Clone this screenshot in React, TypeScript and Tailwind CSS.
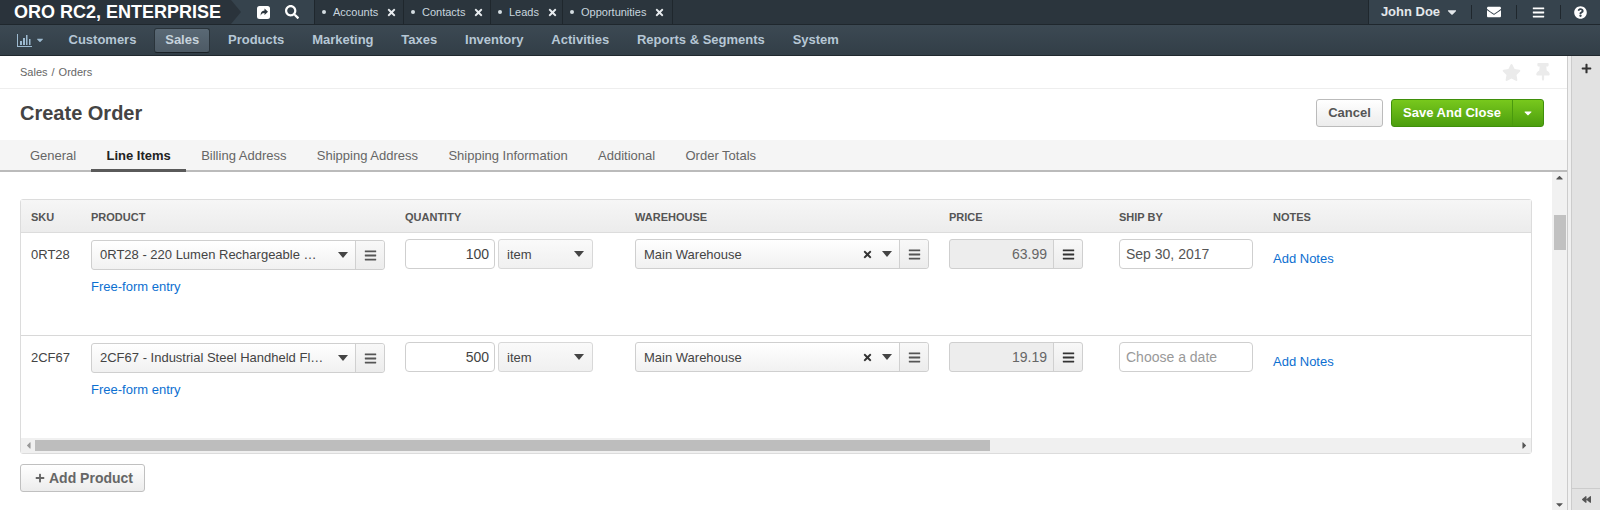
import React from "react";
import {
  FaCaretDown,
  FaBars,
  FaEnvelope,
  FaQuestionCircle,
  FaSearch,
  FaStar,
  FaThumbtack,
  FaTimes,
  FaPlus,
  FaBackward,
  FaCaretUp,
  FaCaretLeft,
  FaCaretRight,
} from "react-icons/fa";

const navItems = [
  "Customers",
  "Sales",
  "Products",
  "Marketing",
  "Taxes",
  "Inventory",
  "Activities",
  "Reports & Segments",
  "System",
];

const pinTabs = [
  { label: "Accounts", width: "w-[89px]" },
  { label: "Contacts", width: "w-[87px]" },
  { label: "Leads", width: "w-[72px]" },
  { label: "Opportunities", width: "w-[110px]" },
];

const pageTabs = [
  "General",
  "Line Items",
  "Billing Address",
  "Shipping Address",
  "Shipping Information",
  "Additional",
  "Order Totals",
];

function ChartIcon() {
  return (
    <svg width="15" height="13" viewBox="0 0 15 13" fill="currentColor">
      <path d="M0 0h1v12h14v1H0z" />
      <path d="M3 7h2v4H3zM6 4h2v7H6zM9 1h1.500v10H9zM12 5h1.500v6H12z" />
    </svg>
  );
}

function ShareIcon() {
  return (
    <svg width="13" height="13" viewBox="0 0 13 13">
      <rect width="13" height="13" rx="2.500" fill="#ffffff" />
      <path
        d="M7.500 2.500 11 5.700 7.500 8.900V7C5.500 7 4.300 7.700 3.700 9.800 3.300 6.700 4.800 4.600 7.500 4.400z"
        fill="#2c363e"
      />
    </svg>
  );
}

function Triangle() {
  return (
    <svg width="10" height="6" viewBox="0 0 10 6" className="shrink-0 text-[#444]" fill="currentColor">
      <path d="M0 0h10L5 6z" />
    </svg>
  );
}

function ListButton({ dark }: { dark?: boolean }) {
  return (
    <div
      className={`flex w-[29px] shrink-0 items-center justify-center rounded-r-[3px] border-l border-[#d0d0d0] bg-linear-to-b from-[#f8f8f8] to-[#ececec] ${
        dark ? "text-[#333]" : "text-[#555]"
      }`}
    >
      <FaBars size={13} />
    </div>
  );
}

function ProductSelect({ text }: { text: string }) {
  return (
    <div className="flex h-[30px] w-[294px] rounded-[3px] border border-[#cfcfcf] bg-linear-to-b from-white to-[#f1f1f1]">
      <div className="flex min-w-0 flex-1 items-center pl-[8px] pr-[7px]">
        <span className="flex-1 whitespace-nowrap text-[13px]">{text}</span>
        <Triangle />
      </div>
      <ListButton />
    </div>
  );
}

function QuantityCell({ value }: { value: string }) {
  return (
    <div className="flex h-[30px] gap-[3px]">
      <div className="flex w-[90px] items-center justify-end rounded-[4px] border border-[#cfcfcf] bg-white pr-[5px] text-[14px]">
        {value}
      </div>
      <div className="flex w-[95px] items-center justify-between rounded-[3px] border border-[#d8d8d8] bg-linear-to-b from-[#fafafa] to-[#f0f0f0] pl-[8px] pr-[8px] text-[13px]">
        <span className="pt-[1px]">item</span>
        <Triangle />
      </div>
    </div>
  );
}

function WarehouseSelect() {
  return (
    <div className="flex h-[30px] w-[294px] rounded-[3px] border border-[#cfcfcf] bg-linear-to-b from-white to-[#f1f1f1]">
      <div className="flex min-w-0 flex-1 items-center pl-[8px] pr-[7px]">
        <span className="flex-1 pt-[1px] text-[13px]">Main Warehouse</span>
        <FaTimes size={11} className="mr-[9px] text-[#333]" />
        <Triangle />
      </div>
      <ListButton />
    </div>
  );
}

function PriceCell({ value }: { value: string }) {
  return (
    <div className="flex h-[30px] w-[134px] overflow-hidden rounded-[3px] border border-[#cfcfcf] bg-[#ededed]">
      <div className="flex flex-1 items-center justify-end pr-[6px] text-[14px] text-[#666]">
        {value}
      </div>
      <ListButton dark />
    </div>
  );
}

function LineRow({
  sku,
  name,
  qty,
  price,
  date,
  placeholder,
}: {
  sku: string;
  name: string;
  qty: string;
  price: string;
  date: string;
  placeholder?: boolean;
}) {
  return (
    <div className="flex h-[103px] border-b border-[#d8d8d8] pt-[6px] text-[#444]">
      <div className="w-[70px] pl-[10px] pt-[6px] text-[13px]">{sku}</div>
      <div className="w-[314px]">
        <div className="pt-[1px]">
          <ProductSelect text={name} />
        </div>
        <div className="mt-[7px] text-[13px] text-[#0c6fd1]">Free-form entry</div>
      </div>
      <div className="w-[230px]">
        <QuantityCell value={qty} />
      </div>
      <div className="w-[314px]">
        <WarehouseSelect />
      </div>
      <div className="w-[170px]">
        <PriceCell value={price} />
      </div>
      <div className="w-[154px]">
        <div
          className={`flex h-[30px] w-[134px] items-center rounded-[4px] border border-[#cfcfcf] bg-white pl-[6px] text-[14px] ${
            placeholder ? "text-[#999]" : "text-[#555]"
          }`}
        >
          {date}
        </div>
      </div>
      <div className="pt-[10px] text-[13px] text-[#0c6fd1]">Add Notes</div>
    </div>
  );
}

export default function App() {
  return (
    <div className="flex h-[510px] w-[1600px] flex-col overflow-hidden bg-white font-['Liberation_Sans',sans-serif] text-[#444]">
      {/* top bar */}
      <div className="flex h-[25px] shrink-0 border-b border-[#1f272d] bg-[#2b353d] text-[#e4e8eb]">
        <div className="relative flex w-[231px] items-center bg-[#2a333b] pl-[14px] text-[18px] font-bold text-white">
          ORO RC2, ENTERPRISE
          <div className="absolute left-[231px] top-0 h-0 w-0 border-y-[12px] border-l-[10px] border-y-transparent border-l-[#2a333b]" />
        </div>
        <div className="flex w-[83px] items-center gap-[15px] bg-[#36434d] pl-[26px] text-white">
          <ShareIcon />
          <FaSearch size={14} />
        </div>
        <div className="flex border-l border-[#1f272d]">
          {pinTabs.map((tab) => (
            <div
              key={tab.label}
              className={`flex items-center border-r border-[#1f272d] pl-[7px] text-[11px] text-[#c9d6df] ${tab.width}`}
            >
              <span className="mr-[7px] h-[4px] w-[4px] rounded-full bg-[#d5dde2]" />
              {tab.label}
              <FaTimes size={11} className="ml-[8px] text-[#e8ecef]" />
            </div>
          ))}
        </div>
        <div className="flex-1" />
        <div className="flex w-[232px] items-center border-l border-[#1f272d] bg-[#36434d]">
          <div className="flex w-[102px] items-center justify-center gap-[5px] text-[13px] font-bold">
            John Doe
            <FaCaretDown size={14} />
          </div>
          <div className="h-[14px] border-l border-[#1f272d]" />
          <div className="flex w-[44px] justify-center text-white">
            <FaEnvelope size={14} />
          </div>
          <div className="h-[14px] border-l border-[#1f272d]" />
          <div className="flex w-[43px] justify-center text-white">
            <FaBars size={13} />
          </div>
          <div className="h-[14px] border-l border-[#1f272d]" />
          <div className="flex flex-1 justify-center text-white">
            <FaQuestionCircle size={13} />
          </div>
        </div>
      </div>

      {/* main nav */}
      <div className="flex h-[31px] shrink-0 items-center border-b border-[#20282e] bg-linear-to-b from-[#3c4953] to-[#323e47] pl-[17px] text-[13px] font-bold text-[#b6c7d5]">
        <div className="flex w-[41.500px] items-center gap-[3px] text-[#9dbad0]">
          <ChartIcon />
          <FaCaretDown size={10} />
        </div>
        <div className="flex items-center gap-[7.800px]">
          {navItems.map((item) => (
            <div
              key={item}
              className={`flex h-[25px] items-center rounded-[3px] px-[10px] ${
                item === "Sales"
                  ? "border border-[#2a343b] border-b-[#1a2126] bg-linear-to-b from-[#5a6975] to-[#4d5a65] text-[#c7d3dc]"
                  : ""
              }`}
            >
              {item}
            </div>
          ))}
        </div>
      </div>

      <div className="flex min-h-0 flex-1">
        {/* page */}
        <div className="flex min-w-0 flex-1 flex-col">
          <div className="flex h-[33px] shrink-0 items-center justify-between border-b border-[#eeeeee] pl-[20px] pr-[15px] text-[11px] text-[#666]">
            <div className="flex">
              <span>Sales</span>
              <span className="mx-[4px]">/</span>
              <span>Orders</span>
            </div>
            <div className="flex items-center gap-[13px] text-[#ebebeb]">
              <FaStar size={19} />
              <FaThumbtack size={18} />
            </div>
          </div>
          <div className="flex h-[51px] shrink-0 items-center justify-between pb-[4px] pl-[20px] pr-[23px]">
            <h1 className="text-[20px] font-bold text-[#444]">Create Order</h1>
            <div className="flex items-center gap-[8px]">
              <div className="flex h-[28px] w-[67px] items-center justify-center rounded-[3px] border border-[#bbbbbb] bg-linear-to-b from-white to-[#ececec] text-[13px] font-bold text-[#555]">
                Cancel
              </div>
              <div className="flex h-[28px] w-[153px] rounded-[3px] border border-[#3f8f0a] bg-linear-to-b from-[#78c81d] to-[#4c9e0d] text-[13px] font-bold text-white">
                <div className="flex flex-1 items-center justify-center border-r border-[#4a9a0e]">
                  Save And Close
                </div>
                <div className="flex w-[30px] items-center justify-center">
                  <FaCaretDown size={12} />
                </div>
              </div>
            </div>
          </div>
          <div className="flex h-[32px] shrink-0 border-b-2 border-[#bbbbbb] bg-[#f5f5f5] pl-[14.700px] text-[13px] text-[#666]">
            {pageTabs.map((tab) => (
              <div
                key={tab}
                className={`-mb-[2px] flex items-center px-[15.200px] ${
                  tab === "Line Items"
                    ? "border-b-[3px] border-[#5a5a5a] pt-[3px] font-bold text-[#222]"
                    : ""
                }`}
              >
                {tab}
              </div>
            ))}
          </div>

          <div className="flex min-h-0 flex-1">
            <div className="min-w-0 flex-1 px-[20px] pt-[27px]">
              <div className="w-[1512px] rounded-[3px] border border-[#dcdcdc]">
                <div className="flex h-[33px] items-center border-b border-[#dcdcdc] bg-linear-to-b from-[#f6f6f6] to-[#ececec] pt-[2px] text-[11px] font-bold text-[#555]">
                  <div className="w-[70px] pl-[10px]">SKU</div>
                  <div className="w-[314px]">PRODUCT</div>
                  <div className="w-[230px]">QUANTITY</div>
                  <div className="w-[314px]">WAREHOUSE</div>
                  <div className="w-[170px]">PRICE</div>
                  <div className="w-[154px]">SHIP BY</div>
                  <div>NOTES</div>
                </div>
                <LineRow
                  sku="0RT28"
                  name="0RT28 - 220 Lumen Rechargeable …"
                  qty="100"
                  price="63.99"
                  date="Sep 30, 2017"
                />
                <LineRow
                  sku="2CF67"
                  name="2CF67 - Industrial Steel Handheld Fl…"
                  qty="500"
                  price="19.19"
                  date="Choose a date"
                  placeholder
                />
                <div className="-mt-px flex h-[15px] items-center bg-[#f0f0f0] text-[#555]">
                  <div className="flex w-[14px] justify-center text-[#999]">
                    <FaCaretLeft size={11} />
                  </div>
                  <div className="h-[11px] w-[955px] bg-[#bdbdbd]" />
                  <div className="flex-1" />
                  <div className="flex w-[14px] justify-center">
                    <FaCaretRight size={11} />
                  </div>
                </div>
              </div>
              <div className="mt-[10px] flex h-[28px] w-[125px] items-center justify-center gap-[4px] rounded-[3px] border border-[#c0c0c0] bg-linear-to-b from-white to-[#ececec] pl-[3px] text-[14px] font-bold text-[#666]">
                <FaPlus size={10} />
                Add Product
              </div>
            </div>
            {/* page scrollbar */}
            <div className="flex w-[15px] shrink-0 flex-col items-center justify-between bg-[#f1f1f1] text-[#555]">
              <FaCaretUp size={11} />
              <div className="mb-auto mt-[32px] h-[35px] w-[12px] bg-[#c1c1c1]" />
              <FaCaretDown size={11} />
            </div>
          </div>
        </div>

        {/* right sidebar */}
        <div className="flex w-[33px] shrink-0 flex-col border-l border-[#cccccc] bg-[#f0f0f0] pl-[3px]">
          <div className="flex flex-1 flex-col border-l border-[#cccccc] bg-[#e2e2e2]">
            <div className="flex h-[24px] items-center justify-center text-[#333]">
              <FaPlus size={11} />
            </div>
            <div className="flex-1" />
            <div className="flex h-[22px] items-center justify-center border-t border-[#cccccc] text-[#555]">
              <FaBackward size={9} />
            </div>
          </div>
        </div>
      </div>
    </div>
  );
}
